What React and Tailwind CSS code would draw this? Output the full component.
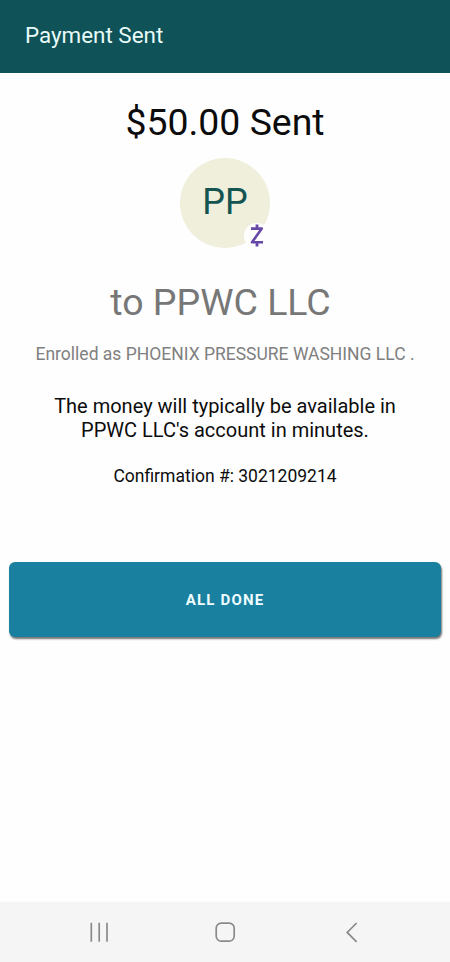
const details = {
  amount: "$50.00 Sent",
  initials: "PP",
  recipient: "to PPWC LLC",
  enrolled: "Enrolled as PHOENIX PRESSURE WASHING LLC .",
  confirmation: "Confirmation #: 3021209214",
};

function ZelleMark() {
  return (
    <svg width="14" height="24" viewBox="0 0 14 24" fill="none" stroke="#6748a8">
      <path d="M7 .5v4M7 18.5v4" strokeWidth="2.8" />
      <path d="M1 4.6h10.8L2 18.2h11" strokeWidth="2.6" strokeLinejoin="round" />
    </svg>
  );
}

function Avatar() {
  return (
    <div className="relative mt-[15.5px] flex h-[90px] w-[90px] items-center justify-center rounded-full bg-[#f0efdc]">
      <span className="pb-[2px] text-[36px] leading-[40px] text-[#145552]">{details.initials}</span>
      <span className="absolute left-[64px] top-[65px] flex h-[26px] w-[26px] items-center justify-center rounded-full bg-[#fefefe]">
        <ZelleMark />
      </span>
    </div>
  );
}

function NavBar() {
  return (
    <nav className="flex h-[60px] items-center justify-between bg-[#f5f5f5] px-[87px] text-[#8a8a8a]">
      <svg width="24" height="24" viewBox="0 0 24 24" fill="none" stroke="currentColor" strokeWidth="1.7">
        <path d="M4.3 2.7v19M12.2 2.7v19M20 2.7v19" />
      </svg>
      <svg width="24" height="24" viewBox="0 0 24 24" fill="none" stroke="currentColor" strokeWidth="1.7">
        <rect x="3.2" y="3.2" width="18" height="18" rx="5" />
      </svg>
      <svg width="24" height="24" viewBox="0 0 24 24" fill="none" stroke="currentColor" strokeWidth="1.7">
        <path d="M17.6 3L8.2 12.4l9.4 9.4" />
      </svg>
    </nav>
  );
}

export default function App() {
  return (
    <div className="flex h-[962px] w-[450px] flex-col bg-[#fefefe] font-['Roboto',sans-serif] text-[#0c0c0c]">
      <header className="flex h-[73px] items-center bg-[#0f5257] px-[25px] pb-1">
        <h1 className="text-[22.4px] leading-7 text-[#e8fbf8]">Payment Sent</h1>
      </header>

      <main className="flex flex-1 flex-col items-center pt-[29px] text-center">
        <h2 className="whitespace-nowrap text-[37.4px] leading-10">{details.amount}</h2>
        <Avatar />
        <p className="mt-[34.5px] whitespace-nowrap pr-[9px] text-[37.5px] leading-10 text-[#777777]">
          {details.recipient}
        </p>
        <p className="mt-5 whitespace-nowrap text-[17.5px] leading-6 text-[#808080]">{details.enrolled}</p>
        <p className="mt-7 whitespace-nowrap text-[20px] leading-6">
          The money will typically be available in
          <br />
          PPWC LLC's account in minutes.
        </p>
        <p className="mt-[22px] whitespace-nowrap text-[17.5px] leading-6">{details.confirmation}</p>
        <div className="mt-[74px] w-full px-[9px]">
          <button className="h-[75px] w-full rounded-[6px] bg-[#19809f] pt-px text-[15px] font-bold tracking-[1.2px] text-[#eefcff] shadow-[1px_2px_2px_rgba(0,0,0,0.55)]">
            ALL DONE
          </button>
        </div>
      </main>

      <NavBar />
    </div>
  );
}
